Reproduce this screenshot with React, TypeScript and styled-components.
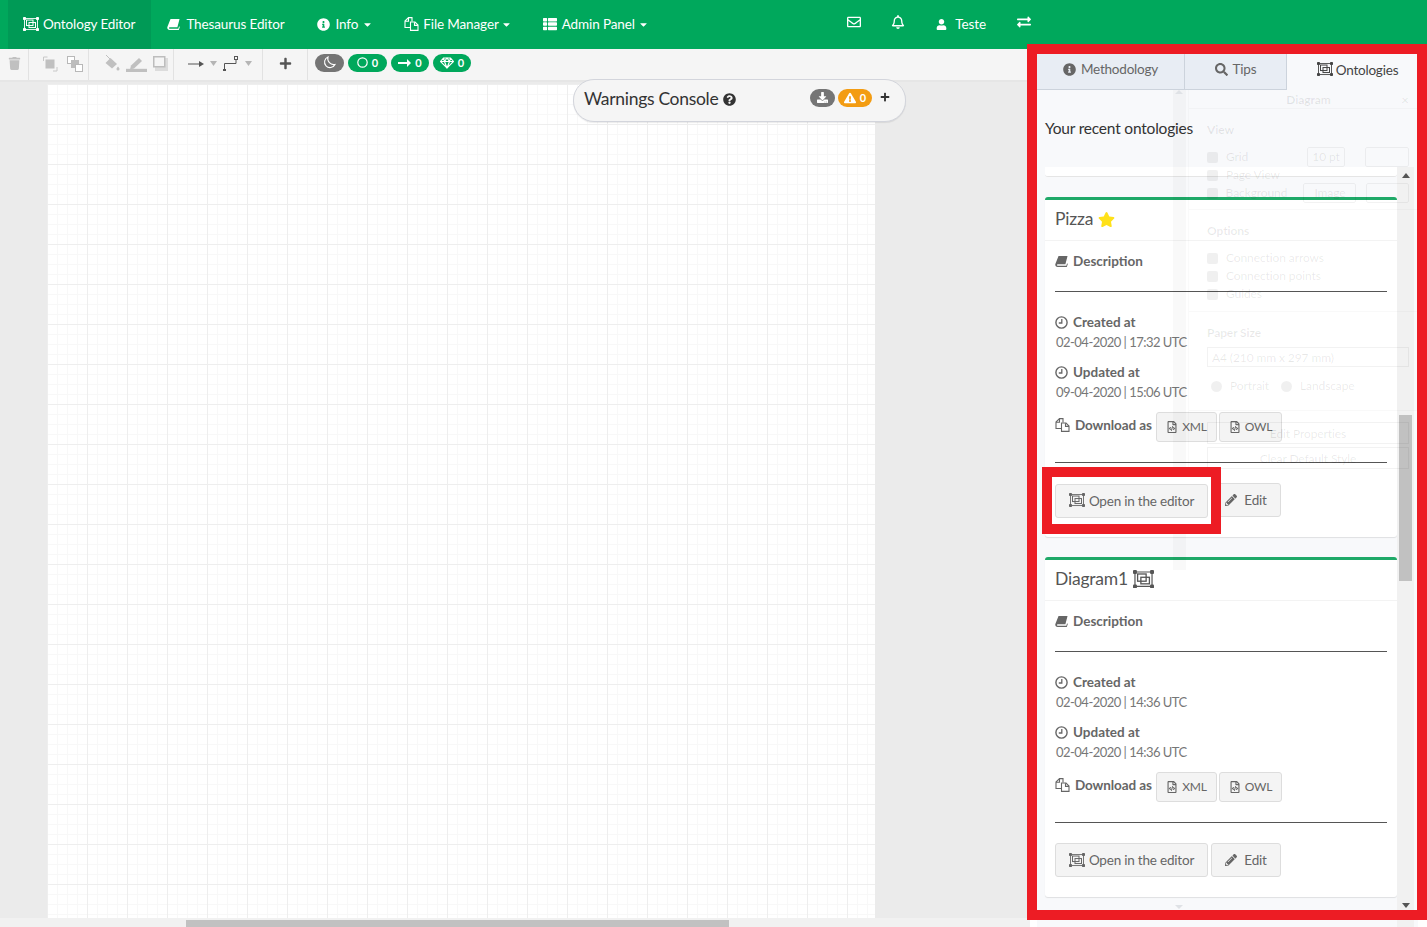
import React from "react";
import styled, { createGlobalStyle } from "styled-components";
import {
  FaCaretDown,
  FaDownload,
  FaExchangeAlt,
  FaExclamationTriangle,
  FaInfoCircle,
  FaPencilAlt,
  FaPlus,
  FaQuestionCircle,
  FaRegBell,
  FaRegEnvelope,
  FaRegFileCode,
  FaSearch,
  FaStar,
  FaThList,
  FaTrash,
  FaUser,
} from "react-icons/fa";

const GlobalStyle = createGlobalStyle`
  html, body {
    margin: 0;
    padding: 0;
    background: #fff;
    overflow: hidden;
  }
  * {
    box-sizing: border-box;
  }
  body {
    font-family: Lato, "Open Sans", Arial, sans-serif;
    font-size: 14px;
    line-height: 20px;
    color: #555;
  }
`;

const Root = styled.div`
  position: relative;
  width: 1427px;
  height: 927px;
  overflow: hidden;
  display: flex;
  flex-direction: column;
`;

/* top bar */
const Nav = styled.nav`
  height: 49px;
  flex: none;
  display: flex;
  align-items: stretch;
  padding: 0 381px 0 8px;
  background: #00a85c;
  color: #fff;
  font-size: 13.5px;
  letter-spacing: -0.12px;
`;

const NavItem = styled.a<{ $active?: boolean; $gap?: number }>`
  display: flex;
  align-items: center;
  gap: ${(p) => p.$gap ?? 6}px;
  padding: 0 16px 1px ${(p) => (p.$active ? 15 : 16)}px;
  background: ${(p) => (p.$active ? "#009a56" : "transparent")};
`;

const NavRight = styled.div`
  margin-left: auto;
  display: flex;
  align-items: stretch;
`;

const NavIconItem = styled(NavItem)`
  padding: 0 15px 5px;
`;

const NavUser = styled(NavItem)`
  gap: 8px;
  padding: 0 16px 1px;
`;

const Caret = styled(FaCaretDown)`
  margin: 0 -1px 0 -2px;
`;

/* editor column */
const Body = styled.div`
  flex: 1;
  display: flex;
  min-height: 0;
`;

const Editor = styled.div`
  width: 1030px;
  flex: none;
  display: flex;
  flex-direction: column;
`;

const Toolbar = styled.div`
  height: 33px;
  flex: none;
  display: flex;
  align-items: stretch;
  background: #f5f5f5;
  border-bottom: 2px solid #e6e6e6;
  color: #c0c0c0;
`;

const ToolGroup = styled.div<{ $w: number; $gap?: number; $shift?: number }>`
  width: ${(p) => p.$w}px;
  display: flex;
  align-items: center;
  justify-content: center;
  gap: ${(p) => p.$gap ?? 0}px;
  padding: 0 0 2px ${(p) => p.$shift ?? 0}px;
  border-right: 1px solid #e2e2e2;
`;

const PillRow = styled.div`
  display: flex;
  align-items: center;
  gap: 4px;
  padding: 0 0 4px 7px;
`;

const Pill = styled.span<{ $w: number; $bg: string }>`
  width: ${(p) => p.$w}px;
  height: 18px;
  display: flex;
  align-items: center;
  justify-content: center;
  gap: 4px;
  border-radius: 9px;
  background: ${(p) => p.$bg};
  color: #fff;
  font-size: 11px;
  font-weight: 700;
`;

const Canvas = styled.div`
  flex: 1;
  min-height: 0;
  padding: 2px 155px 0 47px;
  background: #ebebeb;
`;

const GridPage = styled.div`
  height: 100%;
  background-color: #fff;
  background-image:
    linear-gradient(#eeeeee 1px, transparent 1px),
    linear-gradient(90deg, #eeeeee 1px, transparent 1px),
    linear-gradient(#f8f8f8 1px, transparent 1px),
    linear-gradient(90deg, #f8f8f8 1px, transparent 1px);
  background-size: 40px 40px, 40px 40px, 10px 10px, 10px 10px;
`;

const HScroll = styled.div`
  height: 9px;
  flex: none;
  padding: 2px 301px 0 186px;
  background: #f1f1f1;
`;

const HThumb = styled.div`
  height: 100%;
  background: #c1c1c1;
`;

/* floating console */
const ConsoleCard = styled.div`
  position: absolute;
  left: 573px;
  top: 79px;
  width: 333px;
  height: 43px;
  display: flex;
  align-items: center;
  padding: 0 15px 3px 10px;
  border: 1px solid #d3d5dc;
  border-radius: 21px;
  background: #f5f5f5;
  box-shadow: 0 1px 1px rgba(0, 0, 0, 0.08);
  color: #333;
`;

const ConsoleTitle = styled.span`
  display: flex;
  align-items: center;
  gap: 5px;
  font-size: 17.5px;
  letter-spacing: -0.3px;
`;

const ConsoleActions = styled.div`
  margin-left: auto;
  display: flex;
  align-items: center;
  gap: 3px;
  margin-top: -3px;
`;

const ConsolePlus = styled(FaPlus)`
  margin: -2px 0 0 5px;
`;

/* side panel */
const Side = styled.aside`
  width: 397px;
  flex: none;
  padding: 5px 9px 0 7px;
  background: #fff;
`;

const Panel = styled.div`
  height: 100%;
  display: flex;
  flex-direction: column;
  background: #f8f9fb;
`;

const Tabs = styled.div`
  height: 36px;
  flex: none;
  display: flex;
`;

const Tab = styled.div<{ $w: number; $active?: boolean }>`
  width: ${(p) => p.$w}px;
  display: flex;
  align-items: center;
  justify-content: center;
  gap: ${(p) => (p.$active ? 3 : 5)}px;
  padding: 0 0 5px ${(p) => (p.$active ? 10 : 0)}px;
  font-size: 13.5px;
  letter-spacing: -0.2px;
  color: ${(p) => (p.$active ? "#444" : "#666")};
  background: ${(p) => (p.$active ? "transparent" : "#e8edf4")};
  border-right: ${(p) => (p.$active ? "none" : "1px solid #ccd3dc")};
  border-bottom: ${(p) => (p.$active ? "none" : "1px solid #ccd3dc")};
`;

const RecentTitle = styled.h3`
  height: 77px;
  flex: none;
  margin: 0;
  padding: 28px 8px 0;
  font-size: 15.5px;
  font-weight: 400;
  letter-spacing: -0.2px;
  color: #333;
`;

const ScrollArea = styled.div`
  flex: 1;
  min-height: 0;
  display: flex;
  padding: 0 4px 0 8px;
`;

const CardColumn = styled.div`
  width: 352px;
  flex: none;
  display: flex;
  flex-direction: column;
  gap: 20px;
`;

const CardEnd = styled.div`
  height: 10px;
  flex: none;
  background: #fff;
  border-bottom: 1px solid #e5e5e5;
  border-radius: 0 0 3px 3px;
`;

const Card = styled.section`
  flex: none;
  height: 340px;
  background: #fff;
  border-top: 3px solid #1fa968;
  border-radius: 3px;
  box-shadow: 0 1px 1px rgba(0, 0, 0, 0.1);
`;

const CardHead = styled.header`
  height: 41px;
  display: flex;
  align-items: center;
  gap: 5px;
  padding: 0 10px 2px;
  border-bottom: 1px solid #f3f3f3;
  font-size: 17.5px;
  letter-spacing: -0.2px;
  color: #555;
`;

const CardBody = styled.div`
  padding: 10px 10px 0;
`;

const Label = styled.div`
  display: flex;
  align-items: center;
  gap: 5px;
  font-size: 13.5px;
  font-weight: 700;
  letter-spacing: 0;
  color: #666;
`;

const DateText = styled.div`
  font-size: 13px;
  letter-spacing: -0.52px;
  color: #777;
  padding-left: 1px;
`;

const Rule = styled.hr`
  height: 1px;
  margin: 20px 0;
  border: none;
  background: #555;
`;

const Stamp = styled.div`
  margin-bottom: 10px;
`;

const DownloadRow = styled.div`
  display: flex;
  align-items: flex-start;
  gap: 2px;
`;

const DownloadLabel = styled(Label)`
  width: 99px;
  padding-top: 3px;
  white-space: nowrap;
  letter-spacing: -0.1px;
`;

const SmallButton = styled.button<{ $w: number }>`
  width: ${(p) => p.$w}px;
  height: 30px;
  display: flex;
  align-items: center;
  justify-content: center;
  gap: 4px;
  padding: 0;
  border: 1px solid #ddd;
  border-radius: 3px;
  background: #f4f4f4;
  color: #666;
  font: inherit;
  font-size: 12px;
  letter-spacing: -0.2px;
`;

const ActionRow = styled.div`
  display: flex;
  gap: 3px;
`;

const ActionButton = styled(SmallButton)<{ $gap?: number }>`
  height: 34px;
  font-size: 13.5px;
  gap: ${(p) => p.$gap ?? 4}px;
`;

const Track = styled.div`
  width: 17px;
  flex: none;
  position: relative;
  padding: 248px 2px 0;
  background: #f1f1f1;
`;

const Thumb = styled.div`
  height: 166px;
  background: #c1c1c1;
`;

const TrackArrow = styled.span<{ $down?: boolean }>`
  position: absolute;
  left: 5px;
  ${(p) => (p.$down ? "top: 736px;" : "top: 6px;")}
  border-left: 4px solid transparent;
  border-right: 4px solid transparent;
  ${(p) =>
    p.$down ? "border-top: 5px solid #555;" : "border-bottom: 5px solid #555;"}
`;

/* format panel that shows through the side panel */
const GhostSplit = styled.div`
  position: absolute;
  left: 1173px;
  top: 90px;
  width: 13px;
  height: 480px;
  background: rgba(0, 0, 0, 0.025);
  pointer-events: none;

  &::before,
  &::after {
    content: "";
    position: absolute;
    left: 2px;
    border-left: 4px solid transparent;
    border-right: 4px solid transparent;
  }
  &::before {
    top: 0;
    border-bottom: 4px solid #dfe2e6;
  }
  &::after {
    top: 815px;
    border-top: 4px solid #dfe2e6;
  }
`;

const GhostPanel = styled.div`
  position: absolute;
  left: 1188px;
  top: 90px;
  width: 230px;
  color: rgba(0, 0, 0, 0.09);
  border-left: 1px solid rgba(0, 0, 0, 0.02);
  font-size: 12px;
  letter-spacing: -0.1px;
  pointer-events: none;
`;

const GhostHead = styled.div`
  position: relative;
  height: 18px;
  padding-left: 10px;
  text-align: center;
  font-weight: 700;
  line-height: 20px;
`;

const GhostClose = styled.span`
  position: absolute;
  right: 9px;
  top: 0;
  font-weight: 400;
  font-size: 14px;
`;

const GhostSection = styled.div<{ $h: number }>`
  height: ${(p) => p.$h}px;
  padding: 11px 9px 0 18px;
  border-top: 1px solid rgba(0, 0, 0, 0.025);
`;

const GhostTitle = styled.div`
  font-weight: 700;
  margin-bottom: 8px;
`;

const GhostRow = styled.div`
  height: 18px;
  display: flex;
  align-items: center;
  gap: 8px;
  line-height: 18px;
`;

const GhostCheck = styled.span`
  width: 11px;
  height: 11px;
  border-radius: 2px;
  background: rgba(0, 0, 0, 0.06);
`;

const GhostRadio = styled(GhostCheck)`
  border-radius: 50%;
  margin-left: 4px;
`;

const GhostField = styled.span<{ $w: number; $after?: number }>`
  width: ${(p) => p.$w}px;
  height: 20px;
  margin-right: ${(p) => p.$after ?? 0}px;
  display: flex;
  align-items: center;
  justify-content: center;
  border: 1px solid rgba(0, 0, 0, 0.05);
  border-radius: 2px;
`;

const GhostPush = styled.span`
  margin-left: auto;
`;

const GhostBox = styled.div`
  height: 22px;
  margin-bottom: 3px;
  border: 1px solid rgba(0, 0, 0, 0.05);
  text-align: center;
  line-height: 22px;
`;

const GhostSelect = styled(GhostBox)`
  height: 20px;
  margin: -4px 0 10px;
  padding-left: 4px;
  text-align: left;
  line-height: 20px;
`;

/* red annotation frames */
const RedFrame = styled.div<{
  $l: number;
  $t: number;
  $w: number;
  $h: number;
}>`
  position: absolute;
  left: ${(p) => p.$l}px;
  top: ${(p) => p.$t}px;
  width: ${(p) => p.$w}px;
  height: ${(p) => p.$h}px;
  border: 10px solid #ed1c24;
  pointer-events: none;
`;

const FrameFill = styled(RedFrame)`
  background: #fff;
  display: flex;
  align-items: center;
  padding-left: 3px;
  pointer-events: auto;
`;

/* drawings */
function OntologyIcon({ size = 16 }: { size?: number }) {
  return (
    <svg width={size} height={size * 0.88} viewBox="0 0 16 14" fill="none" stroke="currentColor">
      <path d="M2 1.5h12M2 12.5h12M1.5 2v10M14.5 2v10" strokeWidth="0.9" />
      <rect x="3.5" y="3" width="6.5" height="5.5" strokeWidth="1" />
      <rect x="6" y="5.5" width="6.5" height="5" strokeWidth="1" />
      <g fill="currentColor" stroke="none">
        <rect x="0" y="0" width="3" height="3" rx="0.8" />
        <rect x="13" y="0" width="3" height="3" rx="0.8" />
        <rect x="0" y="11" width="3" height="3" rx="0.8" />
        <rect x="13" y="11" width="3" height="3" rx="0.8" />
      </g>
    </svg>
  );
}

function BookIcon() {
  return (
    <svg width="13" height="13" viewBox="0 0 14 14" fill="currentColor">
      <path d="M3.800 1H13.500L11.200 10H3C1.800 10 1.800 11.700 3 11.700H12.200L13 9l.8.600L12.700 13H2.800C.8 13-.2 11.200.5 9.500z" />
    </svg>
  );
}

function ClockIcon() {
  return (
    <svg width="13" height="13" viewBox="0 0 13 13" fill="none" stroke="currentColor">
      <circle cx="6.500" cy="6.500" r="5.600" strokeWidth="1.400" />
      <path d="M6.800 3v4H3.800" strokeWidth="1.300" />
    </svg>
  );
}

function FilesIcon() {
  return (
    <svg width="15" height="14" viewBox="0 0 15 14" fill="none" stroke="currentColor" strokeWidth="1.100">
      <path d="M8 4.500V.6H4.500L1 4v6.500h5" />
      <path d="M4.500.8V4.200H1" />
      <path d="M6.500 13.400V5h4.500L14 8v5.400z" />
      <path d="M10.500 5.200V8.400H14" />
    </svg>
  );
}

function ToFrontIcon() {
  return (
    <svg width="16" height="16" viewBox="0 0 16 16" fill="none" stroke="#c8c8c8">
      <path d="M5.5 1H1.5v4M11 15h4v-4" />
      <rect x="3.5" y="3.5" width="9" height="9" fill="#c0c0c0" stroke="none" />
    </svg>
  );
}

function ToBackIcon() {
  return (
    <svg width="16" height="16" viewBox="0 0 16 16" fill="none" stroke="#b8b8b8">
      <rect x="0.5" y="0.5" width="7" height="7" fill="#fff" />
      <rect x="4" y="4" width="8" height="8" fill="#bdbdbd" stroke="none" />
      <rect x="8.5" y="8.5" width="7" height="7" fill="#fff" />
    </svg>
  );
}

function FillIcon() {
  return (
    <svg width="16" height="17" viewBox="0 0 16 17" fill="#c0c0c0">
      <path d="M6.5 3 13 9l-5 4.5L1.5 8z" />
      <path d="M2 0l4 4" stroke="#c0c0c0" fill="none" />
      <path d="M14 11.5c1 1.3 1.5 2 1.5 2.6a1.5 1.5 0 0 1-3 0c0-.6.5-1.3 1.5-2.6z" />
    </svg>
  );
}

function LineIcon() {
  return (
    <svg width="21" height="16" viewBox="0 0 21 16" fill="#c0c0c0">
      <path d="M5 9.5 13 2l3 3-8 7.5-4 1z" />
      <rect x="0" y="12.8" width="21" height="3.2" />
    </svg>
  );
}

function ShadowIcon() {
  return (
    <svg width="15" height="15" viewBox="0 0 15 15">
      <rect x="2" y="2" width="13" height="13" fill="#dcdcdc" />
      <rect x="0.75" y="0.75" width="11" height="10" fill="#f5f5f5" stroke="#bdbdbd" strokeWidth="1.5" />
    </svg>
  );
}

function ArrowLineIcon() {
  return (
    <svg width="16" height="8" viewBox="0 0 16 8" fill="#555">
      <path d="M0 3.5h13v1H0z" />
      <path d="M11 1l5 3-5 3z" />
    </svg>
  );
}

function WaypointIcon() {
  return (
    <svg width="16" height="15" viewBox="0 0 16 15" fill="none" stroke="#555">
      <path d="M1.5 13V7.5h11.500V3" />
      <rect x="11.500" y="0.500" width="3" height="3" fill="#f5f5f5" />
      <path d="M0 14h3" strokeWidth="2" />
    </svg>
  );
}

function SmallCaret() {
  return (
    <svg width="7" height="5" viewBox="0 0 7 5" fill="#b5b5b5">
      <path d="M0 0h7L3.500 5z" />
    </svg>
  );
}

function MoonIcon() {
  return (
    <svg width="13" height="13" viewBox="0 0 13 13" fill="none" stroke="#fff" strokeWidth="1.1">
      <path d="M5 1a5.500 5.500 0 1 0 7 7.500A6 6 0 0 1 5 1z" />
    </svg>
  );
}

function CircleMark() {
  return (
    <svg width="11" height="11" viewBox="0 0 11 11" fill="none" stroke="#fff" strokeWidth="1.2">
      <circle cx="5.500" cy="5.500" r="4.700" />
    </svg>
  );
}

function ArrowMark() {
  return (
    <svg width="13" height="8" viewBox="0 0 13 8" fill="#fff">
      <path d="M0 3h9V0l4 4-4 4V5H0z" />
    </svg>
  );
}

function GemMark() {
  return (
    <svg width="14" height="12" viewBox="0 0 14 12" fill="none" stroke="#fff" strokeWidth="1.100">
      <path d="M3.500 1h7L13.500 4.500 7 11 .5 4.500zM.5 4.500h13M4.500 4.500 7 11l2.500-6.500M3.500 1l1 3.500L7 1l2.500 3.500 1-3.500" />
    </svg>
  );
}

type Stamps = { created: string; updated: string };

function OntologyCard({
  title,
  mark,
  stamps,
}: {
  title: string;
  mark: React.ReactNode;
  stamps: Stamps;
}) {
  return (
    <Card>
      <CardHead>
        {title} {mark}
      </CardHead>
      <CardBody>
        <Label>
          <BookIcon /> Description
        </Label>
        <Rule />
        <Stamp>
          <Label>
            <ClockIcon /> Created at
          </Label>
          <DateText>{stamps.created}</DateText>
        </Stamp>
        <Stamp>
          <Label>
            <ClockIcon /> Updated at
          </Label>
          <DateText>{stamps.updated}</DateText>
        </Stamp>
        <DownloadRow>
          <DownloadLabel>
            <FilesIcon /> Download as
          </DownloadLabel>
          <SmallButton $w={61}>
            <FaRegFileCode size={12} /> XML
          </SmallButton>
          <SmallButton $w={63}>
            <FaRegFileCode size={12} /> OWL
          </SmallButton>
        </DownloadRow>
        <Rule />
        <ActionRow>
          <OpenButton />
          <ActionButton $w={70} $gap={7}>
            <FaPencilAlt size={12} /> Edit
          </ActionButton>
        </ActionRow>
      </CardBody>
    </Card>
  );
}

function OpenButton() {
  return (
    <ActionButton $w={153}>
      <OntologyIcon /> Open in the editor
    </ActionButton>
  );
}

function GhostFormat() {
  return (
    <GhostPanel>
      <GhostHead>
        Diagram
        <GhostClose>×</GhostClose>
      </GhostHead>
      <GhostSection $h={101}>
        <GhostTitle>View</GhostTitle>
        <GhostRow>
          <GhostCheck /> Grid
          <GhostPush />
          <GhostField $w={38} $after={12}>
            10 pt
          </GhostField>
          <GhostField $w={44} />
        </GhostRow>
        <GhostRow>
          <GhostCheck /> Page View
        </GhostRow>
        <GhostRow>
          <GhostCheck /> Background
          <GhostPush />
          <GhostField $w={55} $after={2}>
            Image
          </GhostField>
          <GhostField $w={44} />
        </GhostRow>
      </GhostSection>
      <GhostSection $h={102}>
        <GhostTitle>Options</GhostTitle>
        <GhostRow>
          <GhostCheck /> Connection arrows
        </GhostRow>
        <GhostRow>
          <GhostCheck /> Connection points
        </GhostRow>
        <GhostRow>
          <GhostCheck /> Guides
        </GhostRow>
      </GhostSection>
      <GhostSection $h={99}>
        <GhostTitle>Paper Size</GhostTitle>
        <GhostSelect>A4 (210 mm x 297 mm)</GhostSelect>
        <GhostRow>
          <GhostRadio /> Portrait <GhostRadio /> Landscape
        </GhostRow>
      </GhostSection>
      <GhostSection $h={73}>
        <GhostBox>Edit Properties</GhostBox>
        <GhostBox>Clear Default Style</GhostBox>
      </GhostSection>
    </GhostPanel>
  );
}

export default function App() {
  return (
    <Root>
      <GlobalStyle />
      <Nav>
        <NavItem $active $gap={4}>
          <OntologyIcon /> Ontology Editor
        </NavItem>
        <NavItem>
          <BookIcon /> Thesaurus Editor
        </NavItem>
        <NavItem>
          <FaInfoCircle size={13} /> Info <Caret size={11} />
        </NavItem>
        <NavItem $gap={4}>
          <FilesIcon /> File Manager <Caret size={11} />
        </NavItem>
        <NavItem $gap={5}>
          <FaThList size={14} /> Admin Panel <Caret size={11} />
        </NavItem>
        <NavRight>
          <NavIconItem>
            <FaRegEnvelope size={14} />
          </NavIconItem>
          <NavIconItem>
            <FaRegBell size={14} />
          </NavIconItem>
          <NavUser>
            <FaUser size={11} /> Teste
          </NavUser>
          <NavIconItem>
            <FaExchangeAlt size={14} />
          </NavIconItem>
        </NavRight>
      </Nav>
      <Body>
        <Editor>
          <Toolbar>
            <ToolGroup $w={29}>
              <FaTrash size={13} />
            </ToolGroup>
            <ToolGroup $w={60} $gap={9} $shift={8}>
              <ToFrontIcon />
              <ToBackIcon />
            </ToolGroup>
            <ToolGroup $w={85} $gap={6} $shift={10}>
              <FillIcon />
              <LineIcon />
              <ShadowIcon />
            </ToolGroup>
            <ToolGroup $w={89} $gap={6} $shift={4}>
              <ArrowLineIcon />
              <SmallCaret />
              <WaypointIcon />
              <SmallCaret />
            </ToolGroup>
            <ToolGroup $w={45}>
              <FaPlus size={13} color="#555" />
            </ToolGroup>
            <PillRow>
              <Pill $w={29} $bg="#757575">
                <MoonIcon />
              </Pill>
              <Pill $w={39} $bg="#00a85c">
                <CircleMark /> 0
              </Pill>
              <Pill $w={38} $bg="#00a85c">
                <ArrowMark /> 0
              </Pill>
              <Pill $w={38} $bg="#00a85c">
                <GemMark /> 0
              </Pill>
            </PillRow>
          </Toolbar>
          <Canvas>
            <GridPage />
          </Canvas>
          <HScroll>
            <HThumb />
          </HScroll>
        </Editor>
        <Side>
          <Panel>
            <Tabs>
              <Tab $w={148}>
                <FaInfoCircle size={13} /> Methodology
              </Tab>
              <Tab $w={102}>
                <FaSearch size={13} /> Tips
              </Tab>
              <Tab $w={131} $active>
                <OntologyIcon /> Ontologies
              </Tab>
            </Tabs>
            <RecentTitle>Your recent ontologies</RecentTitle>
            <ScrollArea>
              <CardColumn>
                <CardEnd />
                <OntologyCard
                  title="Pizza"
                  mark={<FaStar size={17} color="#ffe11a" />}
                  stamps={{
                    created: "02-04-2020 | 17:32 UTC",
                    updated: "09-04-2020 | 15:06 UTC",
                  }}
                />
                <OntologyCard
                  title="Diagram1"
                  mark={<OntologyIcon size={21} />}
                  stamps={{
                    created: "02-04-2020 | 14:36 UTC",
                    updated: "02-04-2020 | 14:36 UTC",
                  }}
                />
              </CardColumn>
              <Track>
                <TrackArrow />
                <Thumb />
                <TrackArrow $down />
              </Track>
            </ScrollArea>
          </Panel>
        </Side>
      </Body>
      <ConsoleCard>
        <ConsoleTitle>
          Warnings Console <FaQuestionCircle size={13} />
        </ConsoleTitle>
        <ConsoleActions>
          <Pill $w={25} $bg="#757575">
            <FaDownload size={11} />
          </Pill>
          <Pill $w={34} $bg="#f39c12">
            <FaExclamationTriangle size={12} /> 0
          </Pill>
          <ConsolePlus size={10} />
        </ConsoleActions>
      </ConsoleCard>
      <GhostSplit />
      <GhostFormat />
      <RedFrame $l={1027} $t={44} $w={400} $h={876} />
      <FrameFill $l={1042} $t={467} $w={179} $h={67}>
        <OpenButton />
      </FrameFill>
    </Root>
  );
}
